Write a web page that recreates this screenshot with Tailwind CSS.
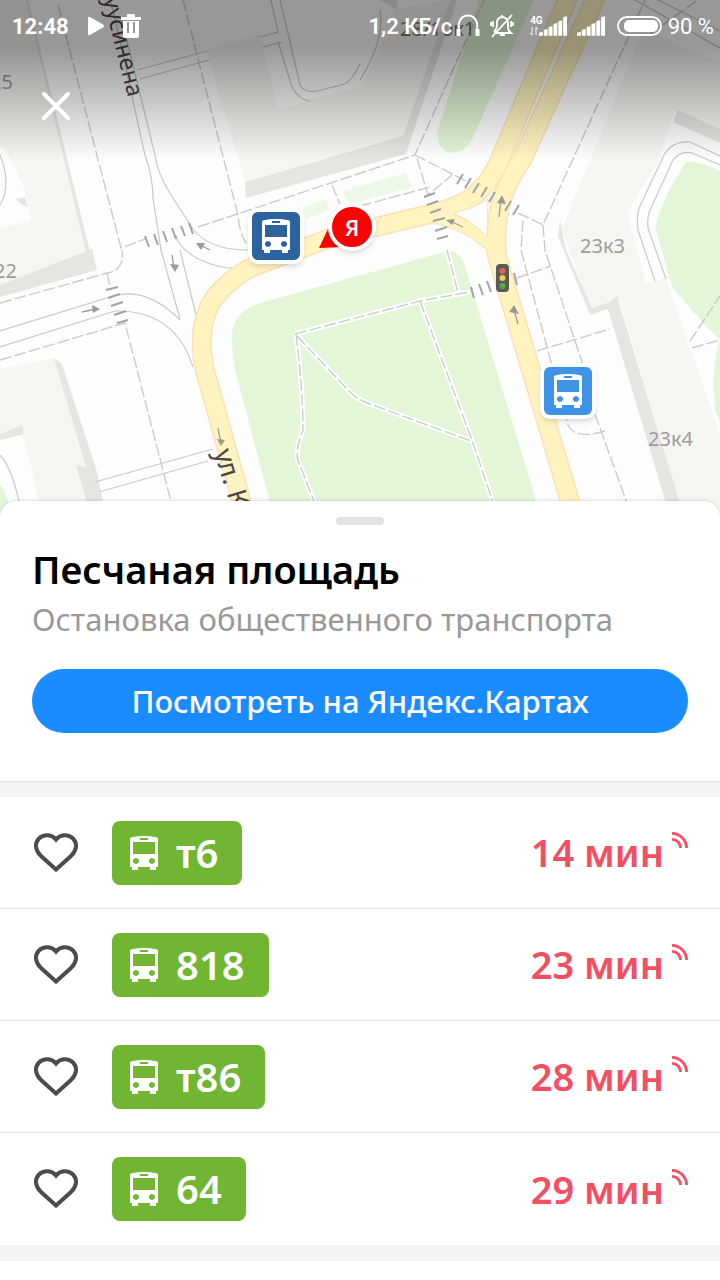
<!DOCTYPE html>
<html lang="ru">
<head>
<meta charset="utf-8">
<meta name="viewport" content="width=device-width, initial-scale=1">
<title>Песчаная площадь</title>
<script src="https://cdn.jsdelivr.net/npm/@tailwindcss/browser@4"></script>
</head>
<body class="min-h-screen bg-white font-['Noto_Sans',sans-serif] text-black">

<svg class="hidden" aria-hidden="true">
  <symbol id="bus" viewBox="0 0 28 34">
    <path fill="currentColor" fill-rule="evenodd" d="M0 3Q0 1.600 1.500 1.200Q14-1 26.500 1.200Q28 1.600 28 3V31H26V34H20V31H8V34H2V31H0ZM10 2V4H18V2ZM3 6V18H25V6ZM6 22a3 3 0 1 0 .01 0ZM22 22a3 3 0 1 0 .01 0Z"/>
  </symbol>
  <symbol id="heart" viewBox="0 0 44 40">
    <path fill="none" stroke="currentColor" stroke-width="4" d="M22 36.500L6.500 22.500C1 17 .5 10 5 5.500C10 .8 18 1.500 22 6.500C26 1.500 34 .8 39 5.500C43.500 10 43 17 37.500 22.500Z"/>
  </symbol>
  <symbol id="live" viewBox="0 0 16 16">
    <path fill="none" stroke="currentColor" stroke-width="2.800" d="M0 1.400A14.600 14.600 0 0 1 14.600 16M0 7.400A8.600 8.600 0 0 1 8.600 16"/>
  </symbol>
</svg>

<header class="relative h-[517px] overflow-hidden bg-[#fdfdfd]">
  <svg class="absolute inset-0 size-full" viewBox="0 0 720 517" preserveAspectRatio="xMidYMid slice" role="img" aria-label="Карта">
    <!-- buildings -->
    <g fill="#f6f5f2">
      <path d="M0 0H28L88 250L0 292Z"/>
      <path d="M0 369L54 358L97 475L104 517H0Z"/>
      <path d="M206 50L260 34L278 109L362 86L398 8L450 0L402 138L245 182Z"/>
      <path d="M643 30L720 62V142L674 112L660 158L627 213L646 283L666 278L720 435V517H683L620 300L592 313L562 229Z"/>
    </g>
    <g fill="#fdfdfd">
      <path d="M0 145C8 152 22 180 28 200L31 220L0 229Z"/>
      <path d="M0 440L22 434L34 475L40 517H0Z"/>
    </g>
    <g fill="#e6e5e2">
      <path d="M28 0L92 260L88 260L26 0Z"/>
      <path d="M0 285L92 249L97 270L0 297Z"/>
      <path d="M54 358L62 364L97 472L106 517H91L76 465L86 467Z"/>
      <path d="M0 434L22 425L24 434L0 440Z"/>
      <path d="M16 199L25 197L28 207L21 204Z"/>
      <path d="M245 182L403 136L450 0H457L406 154L246 198Z"/>
      <path d="M560 220L566 250L592 308L610 302L617 296L684 517H670L608 309L590 315L558 236Z"/>
      <path d="M678 110L720 129V143L673 122Z"/>
      <path d="M380 0L397 10L398 0Z"/>
    </g>
    <!-- parks -->
    <g fill="#e3f6d8">
      <path d="M232 340Q230 313 260 303L448 251Q458 250 464 263L541 517H274L235 370Q232 355 232 340Z"/>
      <path d="M479 0H534L472 140Q462 156 447 152Q435 146 438 130Z"/>
      <path d="M686 162Q698 160 720 171V340L705 325L672 287L656 230Q654 220 672 185Z"/>
      <path d="M720 340C714 355 713 380 715 410L720 422Z"/>
      <path d="M0 484Q6 490 12 517H0Z"/>
    </g>
    <path fill="#edf9e7" d="M302 207L326 199L330 210L306 219ZM342 191L406 173L412 187L350 204Z"/>
    <!-- minor roads -->
    <g fill="none" stroke="#c9c9cb" stroke-width="1.200">
      <path d="M110 0C120 35 132 100 145 155Q153 178 153 198L161 250L180 319"/>
      <path d="M122 20L155 155Q158 175 171 195L193 229C205 245 225 250 248 250"/>
      <path d="M176 235C180 255 215 270 241 268M180 250L197 319"/>
      <path d="M0 331L110 297Q145 285 180 320"/>
      <path d="M0 347L115 311Q175 310 193 367"/>
      <path d="M137 70L207 51M140 79L209 60M260 37L278 32M263 47L282 42M271 0L278 32M280 0L290 42M278 42L292 87Q299 100 310 101M290 42L300 85Q304 93 317 91L345 84Q352 80 360 64"/>
      <path d="M0 155Q12 185 0 205M360 80Q385 40 380 10"/>
      <path d="M95 482L213 449M99 492L208 461M0 455Q14 470 22 517"/>
      <path d="M655 281L638 230Q636 215 640 206L664 155Q672 141 690 142L720 156M666 279L648 228Q647 215 651 208L673 160Q681 150 692 153L720 165"/>
      <path d="M635 0L720 48M658 0L720 31"/>
    </g>
    <!-- main roads -->
    <g fill="none" stroke-linejoin="round">
      <g stroke="#fae2b4">
        <path stroke-width="20" d="M248 525L204 367C195 315 212 290 250 268L330 238L430 214C470 205 485 190 498 164L572 -12"/>
        <path stroke-width="20" d="M577 525L497 256C494 220 500 190 522 160L600 -12"/>
        <path stroke-width="14" d="M424 214Q470 222 496 250"/>
      </g>
      <g stroke="#fff4bf">
        <path stroke-width="17" d="M248 525L204 367C195 315 212 290 250 268L330 238L430 214C470 205 485 190 498 164L572 -12"/>
        <path stroke-width="17" d="M577 525L497 256C494 220 500 190 522 160L600 -12"/>
        <path stroke-width="12" d="M424 214Q470 222 496 250"/>
      </g>
    </g>
    <path fill="#fdfdfd" stroke="#fae2b4" d="M453 213Q475 208 488 199L487 237Q472 221 453 213Z"/>
    <!-- footpaths -->
    <g fill="none" stroke="#fff" stroke-width="5">
      <path d="M295 334L420 301L470 292M296 334Q303 390 303 430Q293 455 300 465L320 517M297 336L350 392Q358 400 370 404L471 441M420 301L472 440L498 517M447 250L458 293"/>
    </g>
    <g fill="none" stroke="#cbcbcd" stroke-width="1.400" stroke-dasharray="12 3">
      <path d="M295 334L420 301L470 292M296 334Q303 390 303 430Q293 455 300 465L320 517M297 336L350 392Q358 400 370 404L471 441M420 301L472 440L498 517M447 250L458 293"/>
      <path d="M58 5L121 248L145 239M183 0L238 215Q240 240 252 250M198 227L415 155L484 0M415 155L470 183M417 158L428 195L452 175M360 206L430 187"/>
      <path d="M0 303L107 273Q125 270 122 250M107 273L110 286M0 360L125 323L175 517M518 213L543 225L628 38L645 0"/>
      <path d="M543 225L545 250L583 365M523 220L521 250L568 425Q575 440 605 431M517 278L551 266M537 351L610 329M590 400L632 517M690 341L720 296M692 348L720 340M332 185L340 204M650 34L698 0"/>
    </g>
    <!-- crossings -->
    <g fill="none" stroke="#9fa5ad" stroke-width="2">
      <path d="M145 236L149 247M154 234L158 245M163 231L167 242M172 228L176 239M181 226L185 236M189 223L193 234M106 290L118 287M108 298L120 294M111 306L123 302M114 315L126 311M117 323L128 320"/>
      <path d="M457 184L463 174M465 188L471 178M473 193L479 183M481 197L487 187M489 202L495 192M505 211L511 201M513 215L519 205M424 197L435 193M427 205L438 201M430 213L441 209M433 221L445 218M435 231L447 227M437 239L448 236M471 287L474 298M479 284L483 295M487 281L491 292M514 273L517 285"/>
    </g>
    <!-- direction arrows -->
    <g fill="none" stroke="#9b9b98" stroke-width="1.300">
      <path d="M82 312L96 309M172 255L174 268M210 250L200 245M218 428L221 443M463 227L450 221M499 217L501 199M518 324L514 310"/>
    </g>
    <path fill="#9b9b98" d="M92 305L100 309L93 313ZM170 264L179 265L175 272ZM196 243L205 243L201 250ZM217 439L225 440L221 446ZM446 220L455 219L452 225ZM497 203L502 195L506 204ZM509 312L514 305L519 314Z"/>
    <!-- labels -->
    <g font-family="'Noto Sans', sans-serif" fill="#9c9c9c" font-size="20">
      <text x="-10" y="89">25</text>
      <text x="-6" y="278">22</text>
      <text x="580" y="253">23к3</text>
      <text x="648" y="446">23к4</text>
      <text x="400" y="36" fill="#777">28/10к1</text>
    </g>
    <g font-family="'Noto Sans', sans-serif" fill="#484848" font-size="23">
      <text transform="translate(128 98) rotate(76)" text-anchor="end">Куусинена</text>
      <text transform="translate(214 452) rotate(73)" font-size="27">ул. Куусинена</text>
    </g>
    <!-- traffic light -->
    <rect x="496" y="264" width="13" height="28" rx="4" fill="#5a5a58"/>
    <circle cx="502.500" cy="271" r="3" fill="#e0645c"/><circle cx="502.500" cy="278" r="3" fill="#ecd244"/><circle cx="502.500" cy="286" r="3" fill="#5fa845"/>
  </svg>

  <div class="absolute inset-x-0 top-0 h-40 bg-linear-to-b from-black/40 from-30% to-transparent"></div>

  <!-- map pins -->
  <div class="absolute top-[208px] left-[248px] grid size-14 place-items-center rounded-[10px] border-4 border-white bg-[#2c629d] text-white shadow-md">
    <svg class="h-[34px] w-7" aria-label="Остановка"><use href="#bus"/></svg>
  </div>
  <div class="absolute top-[363px] left-[540px] grid size-14 place-items-center rounded-[10px] border-4 border-white bg-[#3f93e6] text-white shadow-md">
    <svg class="h-[34px] w-7" aria-label="Остановка"><use href="#bus"/></svg>
  </div>
  <svg class="absolute top-[222px] left-[318px] h-7 w-6" viewBox="0 0 24 28" aria-hidden="true"><path fill="#f00" d="M12 3L1 26L24 25Z"/></svg>
  <div class="absolute top-[203px] left-[328px] grid size-12 place-items-center rounded-full border-4 border-white bg-[#f00] text-[22px] leading-none font-semibold text-white shadow-md">Я</div>

  <!-- status bar -->
  <div class="relative flex h-[52px] items-center justify-between pr-1.5 pl-3 font-[Roboto,sans-serif] text-[22px] text-white">
    <div class="flex items-center">
      <span class="font-bold">12:48</span>
      <svg class="ml-[18px] h-5 w-[18px]" viewBox="0 0 18 20" fill="#fff"><path d="M1 2Q1 0 3 1L16 8.500Q18 10 16 11.500L3 19Q1 20 1 18Z"/></svg>
      <svg class="ml-4 h-6 w-5" viewBox="0 0 20 24" fill="#fff"><path fill-rule="evenodd" d="M0 3H6V1Q6 0 7 0H13Q14 0 14 1V3H20V6H0ZM2 7H18V22Q18 24 16 24H4Q2 24 2 22ZM6 8V19H8V8ZM12 8V19H14V8Z"/></svg>
    </div>
    <div class="flex items-center">
      <span class="font-semibold">1,2 КБ/с</span>
      <svg class="ml-1 h-6 w-6" viewBox="0 0 24 24" fill="none" stroke="#fff" stroke-width="2"><path d="M3 15C0 -3 24 -3 21 15"/><path stroke-width="4" d="M2.500 15V22M21.500 15V22"/></svg>
      <svg class="ml-2.5 size-6" viewBox="0 0 24 24" fill="none" stroke="#fff" stroke-width="1.800"><path d="M4 18Q7 15 7 11Q6 4 12 3Q17 3 18 9V13Q18 17 21 19H4M10 21H15M12 1V3M2 23L22 1M3 7V13M1 8V12M21 7V13M23 8V12"/></svg>
      <span class="ml-4 flex flex-col items-start">
        <span class="text-[10px] leading-[11px] font-bold">4G</span>
        <svg class="h-3 w-2" viewBox="0 0 8 12" fill="none" stroke="#fff"><path d="M2 1V9M0 7L2 9M6 9V1L8 3"/></svg>
      </span>
      <svg class="-ml-1 h-5 w-[28px]" viewBox="0 0 29 20" fill="#fff"><path d="M0 17L4 16V20H0ZM5 14L9 13V20H5ZM10 11L14 10V20H10ZM15 8L19 7V20H15ZM20 5L24 4V20H20ZM25 1L29 0V20H25Z"/></svg>
      <svg class="ml-2.5 h-5 w-[28px]" viewBox="0 0 29 20" fill="#fff"><path d="M0 17L4 16V20H0ZM5 14L9 13V20H5ZM10 11L14 10V20H10ZM15 8L19 7V20H15ZM20 5L24 4V20H20ZM25 1L29 0V20H25Z"/></svg>
      <svg class="ml-3 h-5 w-[45px]" viewBox="0 0 45 20"><rect x="1" y="1" width="43" height="18" rx="9" fill="none" stroke="#fff" stroke-width="1.800"/><rect x="7" y="4" width="34" height="12" rx="5" fill="#fff"/></svg>
      <span class="ml-1.5">90 %</span>
    </div>
  </div>

  <button type="button" aria-label="Закрыть" class="relative mt-[30px] ml-8 grid size-12 place-items-center text-white">
    <svg class="size-8" viewBox="0 0 32 32" fill="none" stroke="currentColor" stroke-width="4" stroke-linecap="round"><path d="M4 4L28 28M28 4L4 28"/></svg>
  </button>
</header>

<main class="relative">
  <section class="relative -mt-4 rounded-t-2xl bg-white px-8 pt-4 pb-12 shadow-[0_-1px_3px_rgba(0,0,0,0.12)]">
    <div class="mx-auto h-2 w-12 rounded bg-[#e3e3e3]"></div>
    <h1 class="mt-4 text-[38px] leading-[56px] font-semibold">Песчаная площадь</h1>
    <p class="text-[31px] leading-[44px] text-[#999]">Остановка общественного транспорта</p>
    <a href="#" class="mt-7 flex h-16 items-center justify-center rounded-full bg-[#1a8cff] text-[31px] font-medium text-white">Посмотреть на Яндекс.Картах</a>
  </section>
  <div class="relative h-4 border-t border-[#e3e3e3] bg-[#f3f3f3]"></div>
  <ul class="divide-y divide-[#e3e3e3]">
    <li class="flex h-28 items-center px-8">
      <button type="button" aria-label="В избранное" class="w-12 text-[#4c4c4c]"><svg class="h-10 w-12"><use href="#heart"/></svg></button>
      <span class="ml-8 flex h-16 items-center gap-[18px] rounded-lg bg-[#70b632] pr-6 pl-[18px] text-[40px] font-semibold text-white"><svg class="h-[34px] w-7"><use href="#bus"/></svg><span>т6</span></span>
      <span class="ml-auto flex items-start gap-2 text-[38px] font-semibold text-[#f44e62]"><span>14 мин</span><svg class="mt-2 size-4"><use href="#live"/></svg></span>
    </li>
    <li class="flex h-28 items-center px-8">
      <button type="button" aria-label="В избранное" class="w-12 text-[#4c4c4c]"><svg class="h-10 w-12"><use href="#heart"/></svg></button>
      <span class="ml-8 flex h-16 items-center gap-[18px] rounded-lg bg-[#70b632] pr-6 pl-[18px] text-[40px] font-semibold text-white"><svg class="h-[34px] w-7"><use href="#bus"/></svg><span>818</span></span>
      <span class="ml-auto flex items-start gap-2 text-[38px] font-semibold text-[#f44e62]"><span>23 мин</span><svg class="mt-2 size-4"><use href="#live"/></svg></span>
    </li>
    <li class="flex h-28 items-center px-8">
      <button type="button" aria-label="В избранное" class="w-12 text-[#4c4c4c]"><svg class="h-10 w-12"><use href="#heart"/></svg></button>
      <span class="ml-8 flex h-16 items-center gap-[18px] rounded-lg bg-[#70b632] pr-6 pl-[18px] text-[40px] font-semibold text-white"><svg class="h-[34px] w-7"><use href="#bus"/></svg><span>т86</span></span>
      <span class="ml-auto flex items-start gap-2 text-[38px] font-semibold text-[#f44e62]"><span>28 мин</span><svg class="mt-2 size-4"><use href="#live"/></svg></span>
    </li>
    <li class="flex h-28 items-center px-8">
      <button type="button" aria-label="В избранное" class="w-12 text-[#4c4c4c]"><svg class="h-10 w-12"><use href="#heart"/></svg></button>
      <span class="ml-8 flex h-16 items-center gap-[18px] rounded-lg bg-[#70b632] pr-6 pl-[18px] text-[40px] font-semibold text-white"><svg class="h-[34px] w-7"><use href="#bus"/></svg><span>64</span></span>
      <span class="ml-auto flex items-start gap-2 text-[38px] font-semibold text-[#f44e62]"><span>29 мин</span><svg class="mt-2 size-4"><use href="#live"/></svg></span>
    </li>
  </ul>
  <div class="h-4 bg-[#f3f3f3]"></div>
</main>
</body>
</html>
